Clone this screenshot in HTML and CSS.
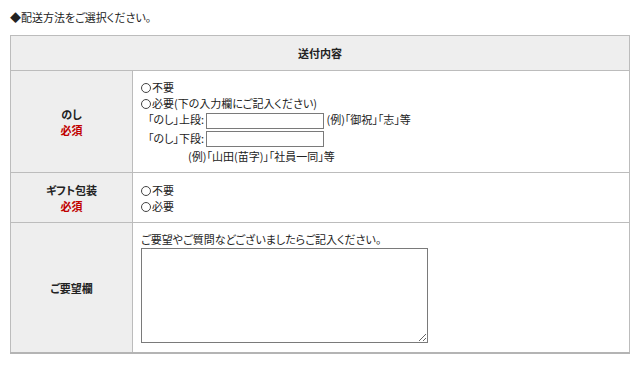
FILE: index.html
```html
<!DOCTYPE html>
<html lang="ja">
<head>
  <meta charset="UTF-8" />
  <title>配送方法</title>
  <link rel="stylesheet" href="styles.css">
</head>
<body>

  <p class="lead">◆配送方法をご選択ください。</p>

  <!-- Delivery form -->
  <table class="form-table">
    <tr>
      <th class="head" colspan="2">送付内容</th>
    </tr>
    <tr class="row-noshi">
      <th>のし<br><span class="req">必須</span></th>
      <td>
        <label class="line"><input type="radio" name="noshi">不要</label>
        <label class="line"><input type="radio" name="noshi">必要(下の入力欄にご記入ください)</label>
        <div class="line indent">「のし」上段:<input type="text" class="text-box"> (例)「御祝」「志」等</div>
        <div class="line indent">「のし」下段:<input type="text" class="text-box"></div>
        <div class="line example">(例)「山田(苗字)」「社員一同」等</div>
      </td>
    </tr>
    <tr class="row-gift">
      <th>ギフト包装<br><span class="req">必須</span></th>
      <td>
        <label class="line"><input type="radio" name="gift">不要</label>
        <label class="line"><input type="radio" name="gift">必要</label>
      </td>
    </tr>
    <tr class="row-note">
      <th>ご要望欄</th>
      <td>
        <div class="line">ご要望やご質問などございましたらご記入ください。</div>
        <textarea class="note"></textarea>
      </td>
    </tr>
  </table>

</body>
</html>
```

FILE: styles.css
```css
* { box-sizing: border-box; }

body {
  margin: 0;
  padding: 8px 10px;
  font-family: "Noto Sans CJK JP", "Liberation Sans", sans-serif;
  font-size: 11px;
  font-feature-settings: "palt";
  color: #222;
  background: #fff;
}

.lead {
  margin: 0 0 9px;
  line-height: 18px;
}

.form-table {
  width: 620px;
  border-collapse: collapse;
  border: 1px solid #b4b4b4;
  border-bottom-width: 2px;
}

.form-table th,
.form-table td {
  border: 1px solid #bcbcbc;
  line-height: 16px;
}

.form-table th {
  width: 122px;
  background: #eeeeee;
  font-weight: bold;
  text-align: center;
  vertical-align: middle;
}

.form-table th.head {
  width: auto;
  height: 35px;
}

.form-table td {
  padding: 8px;
  vertical-align: top;
}

.row-gift td { padding: 9px 8px 8px; }
.row-note td { padding: 8px 8px 9px; }

.req {
  color: #c00000;
}

.line {
  display: block;
  white-space: nowrap;
}

.indent { padding-left: 7px; }
.example { padding-left: 47px; }

input[type="radio"] {
  appearance: none;
  width: 10px;
  height: 10px;
  margin: 0 1px 0 0;
  border: 1px solid #444;
  border-radius: 50%;
  vertical-align: -1px;
  background: #fff;
}

.text-box {
  width: 118px;
  height: 16px;
  margin: 0 0 1px 2px;
  padding: 0;
  border: 1px solid #7a7a7a;
  vertical-align: middle;
  font: inherit;
}

.note {
  display: block;
  width: 287px;
  height: 95px;
  margin: 1px 0 0;
  border: 1px solid #7a7a7a;
  font: inherit;
  resize: both;
}
```
